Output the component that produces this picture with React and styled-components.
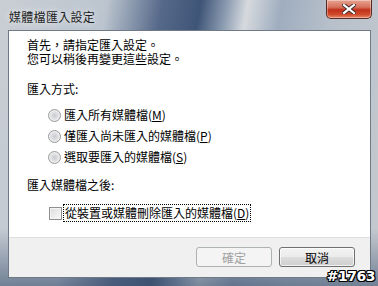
import styled, { createGlobalStyle } from 'styled-components'

const GlobalStyle = createGlobalStyle`
  html, body {
    margin: 0;
    padding: 0;
    background: #ffffff;
  }
  * {
    box-sizing: border-box;
  }
`

const font = `"PMingLiU", "Noto Sans CJK TC", "Noto Sans CJK SC", sans-serif`

export default function App() {
  return (
    <>
      <GlobalStyle />
      <Window>
        <TitleBar>
          <Title>媒體檔匯入設定</Title>
          <CloseButton type="button">
            <svg width="14" height="10" viewBox="0 0 14 10">
              <path
                d="M2 1 L12 9 M12 1 L2 9"
                stroke="#3b2a2a"
                strokeWidth="4"
                strokeLinecap="square"
              />
              <path
                d="M2 1 L12 9 M12 1 L2 9"
                stroke="#ffffff"
                strokeWidth="2.2"
                strokeLinecap="square"
              />
            </svg>
          </CloseButton>
        </TitleBar>
        <Client>
          <Body>
            <Intro>
              首先，請指定匯入設定。
              <br />
              您可以稍後再變更這些設定。
            </Intro>
            <Heading>匯入方式:</Heading>
            <Options>
              <Option>
                <Radio />
                <span>
                  匯入所有媒體檔(<u>M</u>)
                </span>
              </Option>
              <Option>
                <Radio />
                <span>
                  僅匯入尚未匯入的媒體檔(<u>P</u>)
                </span>
              </Option>
              <Option>
                <Radio />
                <span>
                  選取要匯入的媒體檔(<u>S</u>)
                </span>
              </Option>
            </Options>
            <Heading $gap={14}>匯入媒體檔之後:</Heading>
            <CheckRow>
              <Checkbox />
              <FocusLabel>
                從裝置或媒體刪除匯入的媒體檔(<u>D</u>)
              </FocusLabel>
            </CheckRow>
          </Body>
          <Footer>
            <Button type="button" disabled>
              確定
            </Button>
            <Button type="button">取消</Button>
          </Footer>
        </Client>
        <Watermark>#1763</Watermark>
      </Window>
    </>
  )
}

const Window = styled.div`
  position: relative;
  width: 378px;
  height: 286px;
  display: flex;
  flex-direction: column;
  padding: 0 7px 8px 8px;
  background:
    linear-gradient(
      180deg,
      rgba(255, 255, 255, 0) 0%,
      rgba(255, 255, 255, 0) 80%,
      rgba(60, 80, 110, 0.6) 100%
    ),
    linear-gradient(
      100deg,
      #c9ced4 0%,
      #bcc5cf 25%,
      #56698a 38%,
      #3f5577 47%,
      #8a9ab0 53%,
      #d6dade 58%,
      #9fadbf 66%,
      #b7c0ca 78%,
      #c6cacf 100%
    );
  font-family: ${font};
  font-size: 12px;
  color: #000;
`

const TitleBar = styled.div`
  height: 30px;
  display: flex;
  align-items: flex-start;
  justify-content: space-between;
`

const Title = styled.div`
  margin-top: 8px;
  margin-left: 1px;
  font-size: 12px;
  color: #1e1e1e;
  letter-spacing: 0.3px;
  text-shadow: 0 0 6px rgba(255, 255, 255, 0.9);
`

const CloseButton = styled.button`
  width: 46px;
  height: 19px;
  margin-right: -1px;
  padding: 0;
  display: flex;
  align-items: center;
  justify-content: center;
  border: 1px solid #5a2a25;
  border-top: none;
  border-radius: 0 0 5px 5px;
  background: linear-gradient(
    180deg,
    #e8a493 0%,
    #d6705a 40%,
    #c0301a 55%,
    #d04a2a 80%,
    #e6866a 100%
  );
  box-shadow: inset 0 0 0 1px rgba(255, 255, 255, 0.35);
`

const Client = styled.div`
  flex: 1;
  display: flex;
  flex-direction: column;
  border: 1px solid #6f7a86;
  background: #ffffff;
`

const Body = styled.div`
  flex: 1;
  padding: 7px 0 0 18px;
  background: #ffffff;
`

const Intro = styled.div`
  line-height: 14px;
`

const Heading = styled.div`
  margin-top: ${(p) => p.$gap || 16}px;
  line-height: 14px;
`

const Options = styled.div`
  display: flex;
  flex-direction: column;
  gap: 7px;
  padding: 12px 0 0 21px;
`

const Option = styled.label`
  display: flex;
  align-items: center;
  gap: 3px;
  height: 14px;
  line-height: 14px;
`

const Radio = styled.span`
  width: 13px;
  height: 13px;
  border-radius: 50%;
  border: 1px solid #9a9a9a;
  background: radial-gradient(
    circle at 50% 50%,
    #c8cbd0 0%,
    #d9dbde 35%,
    #f2f2f2 75%,
    #fdfdfd 100%
  );
  flex-shrink: 0;
`

const CheckRow = styled.div`
  display: flex;
  align-items: center;
  gap: 2px;
  padding: 13px 0 0 22px;
`

const Checkbox = styled.span`
  width: 13px;
  height: 13px;
  border: 1px solid #8f8f8f;
  background: linear-gradient(135deg, #dcdcdc 0%, #eeeeee 60%, #fafafa 100%);
  box-shadow: inset 0 0 0 1px #f4f4f4;
  flex-shrink: 0;
`

const FocusLabel = styled.span`
  padding: 1px 1px;
  line-height: 14px;
  outline: 1px dotted #000;
`

const Footer = styled.div`
  height: 40px;
  display: flex;
  align-items: center;
  justify-content: flex-end;
  gap: 7px;
  padding: 0 15px 1px 0;
  background: #f0f0f0;
  border-top: 1px solid #dfdfdf;
`

const Button = styled.button`
  width: 76px;
  height: 20px;
  padding: 0;
  font-family: ${font};
  font-size: 12px;
  color: #000;
  border: 1px solid #707070;
  border-radius: 3px;
  background: linear-gradient(180deg, #f3f3f3 0%, #ebebeb 50%, #dddddd 51%, #cfcfcf 100%);
  box-shadow: inset 0 0 0 1px rgba(255, 255, 255, 0.7);
  &:disabled {
    color: #a0a0a0;
    border-color: #adb2b5;
    background: #f4f4f4;
    box-shadow: none;
  }
`

const Watermark = styled.div`
  position: absolute;
  right: 3px;
  bottom: 2px;
  font-family: "DejaVu Sans", sans-serif;
  font-weight: bold;
  font-size: 14px;
  color: #ffffff;
  letter-spacing: -0.5px;
  text-shadow:
    -1px -1px 0 #000,
    1px -1px 0 #000,
    -1px 1px 0 #000,
    1px 1px 0 #000,
    0 1px 0 #000,
    0 -1px 0 #000,
    1px 0 0 #000,
    -1px 0 0 #000;
`
